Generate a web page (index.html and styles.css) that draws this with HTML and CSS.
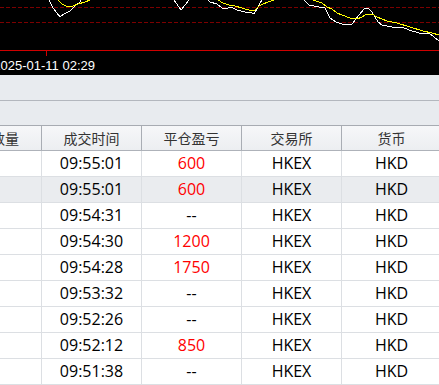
FILE: index.html
```html
<!DOCTYPE html>
<html lang="zh-CN">
<head>
    <meta charset="UTF-8">
    <meta name="viewport" content="width=device-width, initial-scale=1.0">
    <title>成交记录</title>
    <link rel="stylesheet" href="styles.css">
</head>
<body>

    <div class="chart">
        <svg class="plot" width="439" height="57" viewBox="0 0 439 57" shape-rendering="crispEdges">
            <line x1="0" y1="7.5" x2="439" y2="7.5" class="grid"/>
            <line x1="0" y1="22.5" x2="439" y2="22.5" class="grid"/>
            <line x1="0" y1="50.5" x2="439" y2="50.5" class="axis"/>
            <line x1="46.5" y1="50" x2="46.5" y2="56" class="axis"/>

            <polyline class="price" points="47,-5 49,0 53,8 57,13 60,17 64,14 70,11 75,6 80,2 83,-3"/>
            <polyline class="price" points="171,-5 174,0 181,10 189,0 191,-5"/>
            <polyline class="price" points="205,-3 210,2 217,4 222,8 225,9 231,7 237,10 245,12 252,13 254,14 257,9 260,3 262,0 264,-4"/>
            <polyline class="price" points="300,-5 304,0 309,5 314,6 319,7 325,8 330,18 336,22 342,24 352,24 359,15 364,9 366,8 369,9 372,12 375,17 378,22 382,25 392,27 402,27 409,30 419,33 429,33 434,37 439,41"/>

            <polyline class="avg" points="55,-5 58,0 62,4 66,6 73,6 78,4 85,2 90,0 93,-3"/>
            <polyline class="avg" points="215,-3 218,0 223,3 229,5 235,6 242,8 252,11 255,10 259,6 263,4 268,2 274,0 277,-3"/>
            <polyline class="avg" points="309,-3 313,0 322,3 327,7 332,9 337,13 342,15 350,18 357,19 362,17 365,15 372,14 377,17 387,21 397,23 410,27 423,31 432,33 439,35"/>
        </svg>
        <div class="time-label"><span>2025-01-11 02:29</span></div>
    </div>

    <div class="toolbar"></div>
    <div class="toolbar toolbar-second"></div>

    <div class="trades">
        <div class="row head">
            <div class="cell">数量</div>
            <div class="cell">成交时间</div>
            <div class="cell">平仓盈亏</div>
            <div class="cell">交易所</div>
            <div class="cell">货币</div>
        </div>

        <div class="row">
            <div class="cell"></div>
            <div class="cell">09:55:01</div>
            <div class="cell up">600</div>
            <div class="cell">HKEX</div>
            <div class="cell">HKD</div>
        </div>
        <div class="row selected">
            <div class="cell"></div>
            <div class="cell">09:55:01</div>
            <div class="cell up">600</div>
            <div class="cell">HKEX</div>
            <div class="cell">HKD</div>
        </div>
        <div class="row">
            <div class="cell"></div>
            <div class="cell">09:54:31</div>
            <div class="cell">--</div>
            <div class="cell">HKEX</div>
            <div class="cell">HKD</div>
        </div>
        <div class="row">
            <div class="cell"></div>
            <div class="cell">09:54:30</div>
            <div class="cell up">1200</div>
            <div class="cell">HKEX</div>
            <div class="cell">HKD</div>
        </div>
        <div class="row">
            <div class="cell"></div>
            <div class="cell">09:54:28</div>
            <div class="cell up">1750</div>
            <div class="cell">HKEX</div>
            <div class="cell">HKD</div>
        </div>
        <div class="row">
            <div class="cell"></div>
            <div class="cell">09:53:32</div>
            <div class="cell">--</div>
            <div class="cell">HKEX</div>
            <div class="cell">HKD</div>
        </div>
        <div class="row">
            <div class="cell"></div>
            <div class="cell">09:52:26</div>
            <div class="cell">--</div>
            <div class="cell">HKEX</div>
            <div class="cell">HKD</div>
        </div>
        <div class="row">
            <div class="cell"></div>
            <div class="cell">09:52:12</div>
            <div class="cell up">850</div>
            <div class="cell">HKEX</div>
            <div class="cell">HKD</div>
        </div>
        <div class="row">
            <div class="cell"></div>
            <div class="cell">09:51:38</div>
            <div class="cell">--</div>
            <div class="cell">HKEX</div>
            <div class="cell">HKD</div>
        </div>
    </div>

</body>
</html>
```

FILE: styles.css
```css
body {
    margin: 0;
    background-color: #fff;
    font-family: "Open Sans", "Noto Sans CJK SC", sans-serif;
    overflow: hidden;
}

.chart {
    height: 75px;
    background-color: #000;
    overflow: hidden;
}

.plot {
    display: block;
}

.plot .grid {
    stroke: #7c0000;
    stroke-width: 1;
    stroke-dasharray: 4 2;
}

.plot .axis {
    stroke: #d00000;
    stroke-width: 1;
}

.plot .price {
    fill: none;
    stroke: #fff;
    stroke-width: 1;
}

.plot .avg {
    fill: none;
    stroke: #ffff00;
    stroke-width: 1;
}

.time-label {
    width: 95px;
    height: 18px;
    display: flex;
    justify-content: flex-end;
    color: #fff;
    font-family: "Liberation Sans", Arial, sans-serif;
    font-size: 13px;
    line-height: 18px;
    white-space: nowrap;
}

.toolbar {
    height: 25px;
    background-color: #e8ebef;
    border-bottom: 1px solid #b3b7be;
}

.toolbar-second {
    height: 24px;
    border-bottom-color: #a7abb2;
}

.trades {
    margin-left: -31px;
}

.row {
    display: grid;
    grid-template-columns: 73px 100px 100px 100px 100px;
    height: 26px;
    border-bottom: 1px solid #dcdfe3;
    box-sizing: border-box;
}

.row.selected {
    background-color: #eaecef;
}

.cell {
    border-right: 1px solid #dcdfe3;
    text-align: center;
    font-size: 16px;
    line-height: 25px;
    color: #000;
    white-space: nowrap;
    overflow: hidden;
}

.cell.up {
    color: #ff0000;
}

.row.head {
    height: 25px;
    background: linear-gradient(#f6f7f9, #eceef1);
    border-bottom-color: #aeb2b9;
}

.row.head .cell {
    border-right-color: #a9adb4;
    font-family: "Noto Sans CJK SC", sans-serif;
    font-size: 14px;
    line-height: 24px;
    color: #333;
}
```
